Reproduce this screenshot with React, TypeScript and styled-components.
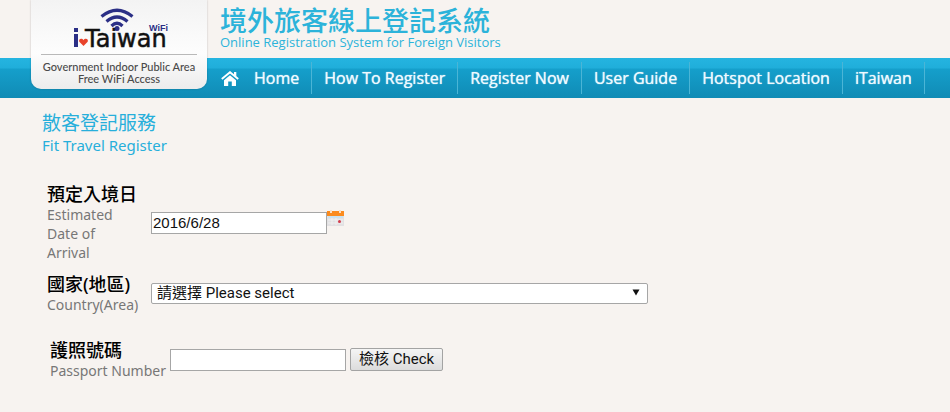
import React from "react";
import styled, { createGlobalStyle } from "styled-components";

const humanist = `"Noto Sans", "Noto Sans CJK TC", sans-serif`;
const control = `Roboto, "Noto Sans CJK TC", sans-serif`;

const GlobalStyle = createGlobalStyle`
  *, *::before, *::after { box-sizing: border-box; }
  body { margin: 0; background: #f7f3f0; font-family: ${humanist}; }
`;

const Header = styled.header`
  position: relative;
`;

const LogoCard = styled.a`
  position: absolute;
  top: 0;
  left: 31px;
  width: 176px;
  height: 89px;
  border-radius: 0 0 10px 10px;
  background: linear-gradient(#f3f3f3, #fdfdfd 60%, #ececec);
  box-shadow: 0 0 2px rgba(0, 0, 0, 0.25);
  color: #4a4a4a;
  font: 500 11px/12px Lato, sans-serif;
  text-align: center;
  text-decoration: none;
`;

const LogoMark = styled.svg`
  display: block;
  width: 100%;
  height: 54px;
`;

const Tagline = styled.span`
  display: block;
  margin: 0 10px;
  padding-top: 6px;
  border-top: 1px solid #b9b9b9;
  white-space: nowrap;
`;

const Masthead = styled.div`
  height: 58px;
  padding: 7px 0 0 220px;
  color: #2cb3da;
  white-space: nowrap;
`;

const SiteTitle = styled.h1`
  margin: 0;
  font-size: 27px;
  font-weight: 500;
  line-height: 28px;
`;

const SiteSubtitle = styled.p`
  margin: 0;
  font-family: "Open Sans", sans-serif;
  font-size: 13px;
  line-height: 14px;
`;

const Nav = styled.nav`
  display: flex;
  align-items: flex-start;
  height: 40px;
  padding: 4px 0 0 209px;
  background: linear-gradient(#25b4e0 0, #20aeda 10px, #159fcb 11px, #108bb5 100%);
`;

const NavLink = styled.a`
  display: flex;
  align-items: center;
  gap: 15px;
  height: 32px;
  padding: 0 12px;
  border-right: 1px solid #4bb5d6;
  color: #effaff;
  font-family: "Open Sans", sans-serif;
  font-size: 16px;
  text-decoration: none;
  text-shadow: 0 0 1px #effaff;
  white-space: nowrap;
`;

const HomeGlyph = styled.svg`
  width: 18px;
  height: 15px;
`;

const Main = styled.main`
  padding: 14px 42px 0;
`;

const PageTitle = styled.h2`
  margin: 0 0 27px;
  color: #27afdb;
  font-size: 19px;
  font-weight: 400;
  line-height: 22px;
`;

const PageSubtitle = styled.span`
  display: block;
  font-size: 15px;
`;

const Row = styled.div<{ $indent: number; $gap: number }>`
  display: flex;
  align-items: center;
  margin: 0 0 ${(p) => p.$gap}px ${(p) => p.$indent}px;
`;

const Label = styled.label<{ $width: number }>`
  flex: none;
  width: ${(p) => p.$width}px;
  color: #777;
  font-size: 14px;
  line-height: 19px;
`;

const LabelTitle = styled.span`
  display: block;
  color: #000;
  font-size: 18px;
  font-weight: 500;
  line-height: 22px;
  white-space: nowrap;
`;

const LabelHint = styled.span<{ $wrapped?: boolean }>`
  display: block;
  width: ${(p) => (p.$wrapped ? "80px" : "auto")};
`;

const TextInput = styled.input`
  width: 176px;
  height: 22px;
  padding: 0 1px;
  border: 1px solid #a6a6a6;
  border-radius: 0;
  background: #fff;
  color: #111;
  font: 15px "Liberation Sans", "Noto Sans CJK TC", sans-serif;
`;

const CalendarButton = styled.button`
  align-self: flex-start;
  width: 17px;
  height: 16px;
  margin-top: 27px;
  padding: 0;
  border: 0;
  background: none;

  svg { display: block; }
`;

const SelectFrame = styled.div`
  position: relative;
  flex: 0 1 497px;
`;

const Select = styled.select`
  display: block;
  width: 100%;
  height: 21px;
  padding: 0 20px 0 5px;
  border: 1px solid #a6a6a6;
  border-radius: 2px;
  background: #fff;
  color: #111;
  font: 15px/19px ${control};
  appearance: none;
`;

const SelectArrow = styled.svg`
  position: absolute;
  top: 6px;
  right: 8px;
  pointer-events: none;
`;

const CheckButton = styled.button`
  height: 23px;
  margin-left: 4px;
  padding: 0 8px;
  border: 1px solid #a3a3a3;
  border-radius: 2px;
  background: linear-gradient(#f5f5f5, #dcdcdc);
  color: #111;
  font: 15px/19px ${control};
  white-space: nowrap;
`;

const links = ["How To Register", "Register Now", "User Guide", "Hotspot Location", "iTaiwan"];

function Logo() {
  return (
    <LogoCard href="#">
      <LogoMark viewBox="0 0 176 54" role="img" aria-label="iTaiwan WiFi">
        <g fill="none" stroke="#2b2f86" strokeWidth="3.2">
          <path d="M70.500 16.500Q86 4 101.500 16.500" />
          <path d="M75.500 21.500Q86 12.500 96.500 21.500" />
          <path d="M80.500 26Q86 20.500 91.500 26" />
        </g>
        <circle cx="86" cy="28.500" r="2.500" fill="#2b2f86" />
        <path d="M43 28h4v4h-4zM43 34h4v13h-4z" fill="#2b2f86" />
        <path d="M52.500 46l-4.200-4.200c-1.200-3 2.700-4.200 4.200-1.500 1.500-2.700 5.400-1.500 4.200 1.500z" fill="#e8432b" />
        <text x="54" y="47" fontFamily="DejaVu Sans" fontSize="24" fill="#111" stroke="#111" strokeWidth="0.500">Taiwan</text>
        <text x="118" y="31" fontFamily="Liberation Sans" fontSize="9" fontWeight="700" fill="#2b2f86">WiFi</text>
      </LogoMark>
      <Tagline>
        Government Indoor Public Area
        <br />
        Free WiFi Access
      </Tagline>
    </LogoCard>
  );
}

function HomeIcon() {
  return (
    <HomeGlyph viewBox="0 0 18 15" aria-hidden="true">
      <path d="M0.800 8L9 1.200 17.200 8" fill="none" stroke="#fff" strokeWidth="1.900" />
      <path d="M13 1h2.300v4.800L13 3.800z" fill="#fff" />
      <path d="M9 4.200L15 9.200V15h-4.200v-4.500H7.200V15H3V9.200z" fill="#fff" />
    </HomeGlyph>
  );
}

function CalendarIcon() {
  return (
    <svg width="17" height="16" viewBox="0 0 17 16" aria-hidden="true">
      <path d="M0 5h17v11H0z" fill="#e2e1e3" />
      <path d="M1 6h15v2H1z" fill="#c9e2f0" />
      <path d="M1 10h15M1 13h15M5 8v7M9 8v7" stroke="#f0f0f0" />
      <path d="M0 1h17v5H0z" fill="#fb8b1e" />
      <path d="M3 0h2v3H3zM12 0h2v3h-2z" fill="#f9dfc4" />
      <circle cx="12.500" cy="11.500" r="1.500" fill="#d23b4b" />
    </svg>
  );
}

export default function App() {
  return (
    <>
      <GlobalStyle />
      <Header>
        <Masthead>
          <SiteTitle>境外旅客線上登記系統</SiteTitle>
          <SiteSubtitle>Online Registration System for Foreign Visitors</SiteSubtitle>
        </Masthead>
        <Nav>
          <NavLink href="#">
            <HomeIcon />
            Home
          </NavLink>
          {links.map((name) => (
            <NavLink href="#" key={name}>{name}</NavLink>
          ))}
        </Nav>
        <Logo />
      </Header>
      <Main>
        <PageTitle>
          散客登記服務
          <PageSubtitle>Fit Travel Register</PageSubtitle>
        </PageTitle>
        <form onSubmit={(e) => e.preventDefault()}>
          <Row $indent={5} $gap={11}>
            <Label htmlFor="arrival" $width={104}>
              <LabelTitle>預定入境日</LabelTitle>
              <LabelHint $wrapped>Estimated Date of Arrival</LabelHint>
            </Label>
            <TextInput id="arrival" defaultValue="2016/6/28" />
            <CalendarButton type="button" aria-label="Choose date">
              <CalendarIcon />
            </CalendarButton>
          </Row>
          <Row $indent={5} $gap={25}>
            <Label htmlFor="country" $width={104}>
              <LabelTitle>國家(地區)</LabelTitle>
              <LabelHint>Country(Area)</LabelHint>
            </Label>
            <SelectFrame>
              <Select id="country">
                <option>請選擇 Please select</option>
              </Select>
              <SelectArrow width="8" height="7" viewBox="0 0 8 7" aria-hidden="true">
                <path d="M0.500 0.500h7L4 6.500z" fill="#111" />
              </SelectArrow>
            </SelectFrame>
          </Row>
          <Row $indent={8} $gap={0}>
            <Label htmlFor="passport" $width={120}>
              <LabelTitle>護照號碼</LabelTitle>
              <LabelHint>Passport Number</LabelHint>
            </Label>
            <TextInput id="passport" />
            <CheckButton type="button">檢核 Check</CheckButton>
          </Row>
        </form>
      </Main>
    </>
  );
}
